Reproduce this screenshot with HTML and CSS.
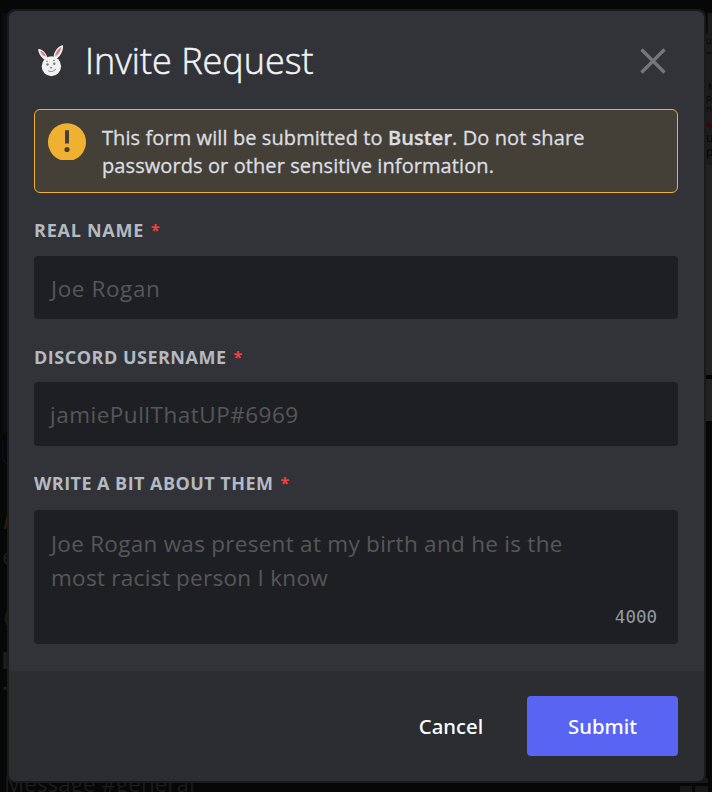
FILE: index.html
```html
<!DOCTYPE html>
<html lang="en">
<head>
<meta charset="utf-8">
<title>Invite Request</title>
<link rel="stylesheet" href="styles.css">
</head>
<body>
<div class="backdrop" aria-hidden="true">
  <svg class="scene" width="712" height="792" viewBox="0 0 712 792">
    <rect x="2" y="13" width="8" height="420" fill="#0c0d0f"/>
    <rect x="704" y="13" width="8" height="152" fill="#1c1c1d"/>
    <rect x="704" y="165" width="8" height="256" fill="#222223"/>
    <path d="M704 53h8" stroke="#080808" stroke-width="1"/>
    <path d="M704 377h8" stroke="#050505" stroke-width="4"/>
    <path d="M705 123.500l8 3" stroke="#3a0808" stroke-width="4"/>
    <path d="M3 440v18q0 4 5 6" fill="none" stroke="#0c0e2a" stroke-width="1.500"/>
    <path d="M8 611q-5 7 0 15" fill="none" stroke="#1b1d15" stroke-width="2"/>
    <path d="M678 778h30v5h-30zM680 786h12v6h-12zM695 786h13v6h-13z" fill="#171718"/>
  </svg>
  <span class="ghost ghost-composer">Message #general</span>
  <span class="ghost ghost-name">M</span>
  <span class="ghost ghost-line">e</span>
  <span class="ghost ghost-heading">E</span>
  <span class="ghost ghost-sub">T</span>
  <span class="ghost ghost-right g1">J</span>
  <span class="ghost ghost-right g2">ut</span>
  <span class="ghost ghost-right g3">M</span>
  <span class="ghost ghost-right g4">p</span>
  <span class="ghost ghost-right g5">n</span>
  <span class="ghost ghost-right g6">u</span>
  <span class="ghost ghost-right g7">po</span>
</div>
<form class="modal">
  <header class="header">
    <svg class="avatar" width="28" height="34" viewBox="0 0 28 34">
      <g fill="#f1f1f1">
        <path d="M1.200 5.200C3.500 4 9 8 10.500 14L7.500 15.500C4 13.500 1.200 8.500 1.200 5.200Z"/>
        <path d="M26 1.300C22 1.500 16.500 7 16.500 14L20 14.500C24.500 11 26.500 5 26 1.300Z"/>
        <ellipse cx="14.400" cy="22.300" rx="9.700" ry="10"/>
      </g>
      <path d="M3 6.500Q7.500 8 9 12.500Q4.500 12 3 6.500ZM24.500 3Q18.500 6 18 12.500Q23.500 9.500 24.500 3Z" fill="#d98282"/>
      <g fill="#777"><circle cx="10.500" cy="20.500" r="1.200"/><circle cx="17.300" cy="19.700" r="1.200"/><ellipse cx="14" cy="23.700" rx="1.200" ry=".7"/></g>
      <path d="M11 26.700q4 2.300 8-1.700M9 17.600l2-.6M16 16.400l2 .2" fill="none" stroke="#777" stroke-width=".8"/>
    </svg>
    <h1 class="title">Invite Request</h1>
    <svg class="close" width="28" height="28" viewBox="0 0 28 28"><path d="M2.500 2.500L25.500 25.500M25.500 2.500L2.500 25.500" stroke="#76777b" stroke-width="3.200"/></svg>
  </header>
  <div class="content">
    <div class="notice">
      <svg class="warn" width="38" height="38" viewBox="0 0 38 38"><path d="M12.500 37A19 19 0 1 1 25.500 37Z" fill="#f0b132"/><path d="M17 7.300h4v13.200h-4z" fill="#454037"/><circle cx="19" cy="26.500" r="2.600" fill="#454037"/></svg>
      <p class="notice-text">This form will be submitted to <b>Buster</b>. Do not share<br>passwords or other sensitive information.</p>
    </div>
    <div class="field">
      <div class="label"><span>REAL NAME</span><span class="star">*</span></div>
      <div class="input">Joe Rogan</div>
    </div>
    <div class="field">
      <div class="label"><span>DISCORD USERNAME</span><span class="star">*</span></div>
      <div class="input tall">jamiePullThatUP#6969</div>
    </div>
    <div class="field">
      <div class="label"><span>WRITE A BIT ABOUT THEM</span><span class="star">*</span></div>
      <div class="textarea">
        <p>Joe Rogan was present at my birth and he is the<br>most racist person I know</p>
        <span class="count">4000</span>
      </div>
    </div>
  </div>
  <footer class="footer">
    <button type="button" class="btn cancel">Cancel</button>
    <button type="button" class="btn submit">Submit</button>
  </footer>
</form>
</body>
</html>
```
FILE: styles.css
```css
* { box-sizing: border-box; }
body {
  margin: 0;
  width: 712px;
  height: 792px;
  overflow: hidden;
  padding: 11px 8px 11px 9px;
  background: #060707;
  font-family: "Open Sans", "Noto Sans", sans-serif;
}
h1, p { margin: 0; }
svg { display: block; flex: none; }
.backdrop { position: absolute; inset: 0; overflow: hidden; }
.ghost { position: absolute; white-space: nowrap; color: #1b1c1d; line-height: 1; }
.ghost-composer { left: 4px; top: 773px; font-size: 22.500px; }
.ghost-name { left: 3px; top: 509px; font-size: 22px; font-style: italic; color: #3a1c08; }
.ghost-line { left: 2px; top: 544px; font-size: 24px; }
.ghost-heading { left: 1px; top: 648px; font-size: 24px; font-weight: 700; }
.ghost-sub { left: 3px; top: 682px; font-size: 22px; font-weight: 700; }
.ghost-right { left: 706px; font-size: 9px; color: #060606; }
.g1 { top: 10px; left: 702px; font-size: 23px; font-weight: 700; }
.g2 { top: 36px; }
.g3 { top: 82px; left: 708px; }
.g4 { top: 93px; }
.g5 { top: 104px; }
.g6 { top: 132px; font-size: 12px; }
.g7 { top: 146px; font-size: 12px; }
.modal {
  position: relative;
  width: 695px;
  height: 770px;
  display: flex;
  flex-direction: column;
  border-radius: 6px;
  overflow: hidden;
  background: #313338;
  outline: 2px solid #191a1c;
}
.header { display: flex; align-items: center; height: 98px; padding: 0 37px 0 28px; }
.avatar { margin-top: 2px; }
.title { margin: 2px 0 0 20px; font-size: 36px; font-weight: 300; line-height: 48px; color: #f2f3f5; white-space: nowrap; -webkit-text-stroke: .5px #f2f3f5; }
.close { margin: 2px 0 0 auto; }
.content { flex: 1; padding: 0 26px 0 25px; }
.notice {
  display: flex;
  height: 84px;
  padding: 13px;
  border: 1px solid #f0b132;
  border-radius: 6px;
  background: #454037;
}
.notice-text { margin: 1px 0 0 16px; font-size: 20px; letter-spacing: .09px; line-height: 28px; color: #dbdee1; white-space: nowrap; -webkit-text-stroke: .3px #dbdee1; }
.notice-text b { font-weight: 600; }
.label {
  display: flex;
  gap: 7px;
  padding-top: 24px;
  height: 63px;
  line-height: 26px;
  font-size: 18px;
  font-weight: 700;
  letter-spacing: .5px;
  color: #b5bac1;
  white-space: nowrap;
}
.field + .field .label { padding-top: 25px; }
.field:nth-child(2) .label { letter-spacing: .75px; }
.field:nth-child(4) .label { height: 64px; padding-top: 24px; letter-spacing: .45px; }
.star { color: #f23f42; font-size: 16px; }
.input {
  display: flex;
  align-items: center;
  height: 63px;
  padding: 1px 17px 0;
  border-radius: 4px;
  background: #1e1f22;
  color: #55575b;
  font-size: 22.500px;
  letter-spacing: .6px;
  white-space: nowrap;
}
.input.tall { height: 64px; padding-left: 16px; letter-spacing: .5px; }
.textarea {
  display: flex;
  flex-direction: column;
  justify-content: space-between;
  height: 134px;
  padding: 17px 21px 15px 17px;
  border-radius: 4px;
  background: #1e1f22;
  color: #55575b;
  font-size: 22.500px;
  letter-spacing: .28px;
  line-height: 34px;
  white-space: nowrap;
}
.textarea p::first-line { letter-spacing: .28px; }
.count { align-self: flex-end; font: 400 17.500px/24px "DejaVu Sans Mono", monospace; letter-spacing: 0; color: #949ba4; }
.footer {
  display: flex;
  justify-content: flex-end;
  align-items: center;
  height: 110px;
  padding: 0 26px;
  background: #2b2d31;
}
.btn { height: 60px; padding: 1px 0 0; border: 0; border-radius: 4px; background: none; color: #fff; font: 500 20.300px/59px "Noto Sans", sans-serif; }
.cancel { width: 152px; }
.submit { width: 151px; background: #5865f2; }
```
